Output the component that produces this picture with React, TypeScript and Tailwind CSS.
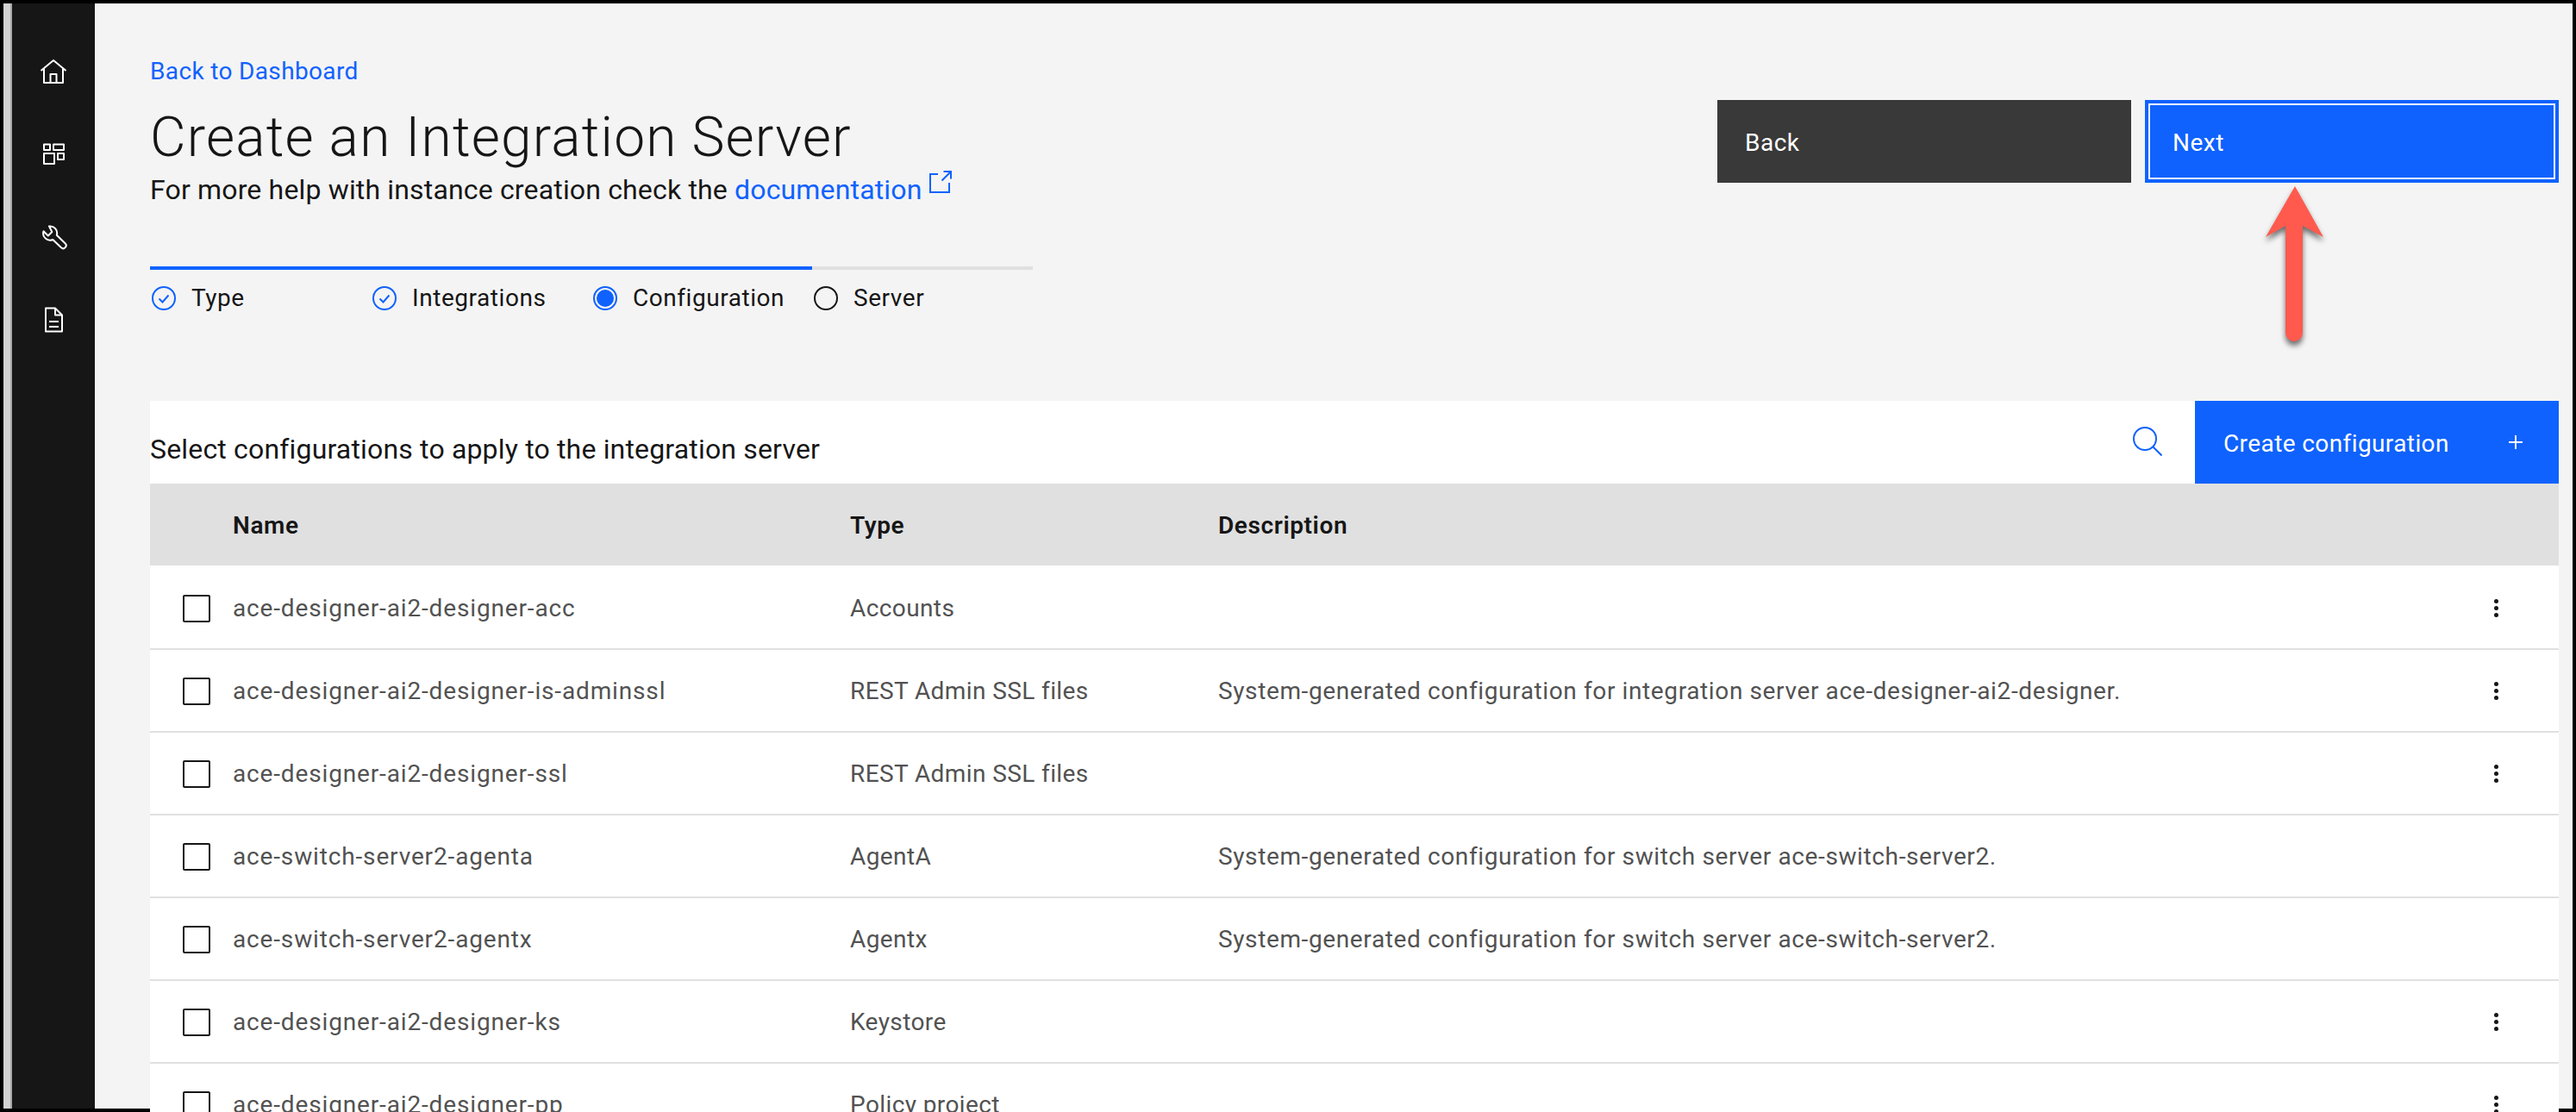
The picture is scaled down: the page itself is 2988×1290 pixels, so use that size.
import React from 'react';

const FONT = "font-['Roboto',sans-serif]";

const ROWS = [
  { name: 'ace-designer-ai2-designer-acc', type: 'Accounts', desc: '', menu: true },
  { name: 'ace-designer-ai2-designer-is-adminssl', type: 'REST Admin SSL files', desc: 'System-generated configuration for integration server ace-designer-ai2-designer.', menu: true },
  { name: 'ace-designer-ai2-designer-ssl', type: 'REST Admin SSL files', desc: '', menu: true },
  { name: 'ace-switch-server2-agenta', type: 'AgentA', desc: 'System-generated configuration for switch server ace-switch-server2.', menu: false },
  { name: 'ace-switch-server2-agentx', type: 'Agentx', desc: 'System-generated configuration for switch server ace-switch-server2.', menu: false },
  { name: 'ace-designer-ai2-designer-ks', type: 'Keystore', desc: '', menu: true },
  { name: 'ace-designer-ai2-designer-pp', type: 'Policy project', desc: '', menu: true },
];

const HomeIcon = () => (
  <svg width="32" height="32" viewBox="0 0 32 32" fill="none" stroke="white" strokeWidth="2" strokeLinejoin="round">
    <path d="M1.500 15 16 3l14.500 12" />
    <path d="M5 12.500V29h22V12.500" />
    <path d="M12.500 29V19h7v10" />
  </svg>
);

const AppsIcon = () => (
  <svg width="32" height="32" viewBox="0 0 32 32" fill="none" stroke="white" strokeWidth="2" strokeLinejoin="round">
    <rect x="5" y="4.500" width="7" height="6.500" />
    <rect x="16" y="4.500" width="12" height="6.500" />
    <rect x="5" y="15" width="12" height="12" />
    <rect x="21" y="15" width="7" height="7" />
  </svg>
);

const ToolIcon = () => (
  <svg width="32" height="32" viewBox="0 0 32 32" fill="none" stroke="white" strokeWidth="2" strokeLinejoin="round">
    <path d="M11 3.500a8 8 0 0 1 8.800 10.200l10 9.800a3.400 3.400 0 0 1-4.800 4.800L15.300 19a8 8 0 0 1-10.800-9.800l5.300 5.300 4.500-4.500Z" />
  </svg>
);

const DocIcon = () => (
  <svg width="32" height="32" viewBox="0 0 32 32" fill="none" stroke="white" strokeWidth="2" strokeLinejoin="round">
    <path d="M7 2.500h11l8 8V29.500H7Z" />
    <path d="M18 2.500v8h8" />
    <path d="M11 18h11M11 24h11" />
  </svg>
);

const CheckCircle = () => (
  <svg width="28" height="28" viewBox="0 0 28 28" fill="none" stroke="#0f62fe" strokeWidth="2">
    <circle cx="14" cy="14" r="13" />
    <path d="M8.500 14.500 12.500 18.500 19.500 10.500" />
  </svg>
);

const Step = ({ label, icon }: { label: string; icon: React.ReactNode }) => (
  <div className="flex items-center pl-[2px] gap-[18px]">
    {icon}
    <span className="text-[28px] tracking-[0.55px] text-[#161616]">{label}</span>
  </div>
);

const Kebab = () => (
  <div className="flex flex-col gap-[3px] items-center w-[5px] -mt-[2px] ml-[1px]">
    <span className="w-[5px] h-[5px] rounded-full bg-[#161616]" />
    <span className="w-[5px] h-[5px] rounded-full bg-[#161616]" />
    <span className="w-[5px] h-[5px] rounded-full bg-[#161616]" />
  </div>
);

export default function App() {
  return (
    <div className={`${FONT} flex w-[2988px] h-[1290px] overflow-hidden bg-black p-[4px]`}>
      <div className="w-[10px] shrink-0 bg-[#d2d2d2] border-r-2 border-[#a8a8a8]" />

      {/* Side nav */}
      <nav className="w-[96px] shrink-0 bg-[#161616] flex flex-col items-center pt-[31px]">
        <div className="h-[96px] flex items-center justify-center"><HomeIcon /></div>
        <div className="h-[96px] flex items-center justify-center"><AppsIcon /></div>
        <div className="h-[96px] flex items-center justify-center"><ToolIcon /></div>
        <div className="h-[96px] flex items-center justify-center"><DocIcon /></div>
      </nav>

      <main className="flex-1 min-w-0 bg-[#f4f4f4] pl-[64px] pr-[16px] pt-[63px] relative">
        {/* Heading */}
        <div className="flex justify-between items-start h-[398px]">
          <div className="w-[1024px]">
            <a className="block text-[28px] leading-[32px] tracking-[0.35px] text-[#0f62fe]">Back to Dashboard</a>
            <h1 className="mt-[19px] text-[64px] leading-[84px] font-light tracking-[1.2px] text-[#161616] whitespace-nowrap">Create an Integration Server</h1>
            <p className="-mt-[2px] text-[32px] leading-[40px] tracking-[0.16px] text-[#161616] whitespace-nowrap flex items-start">
              For more help with instance creation check the&nbsp;
              <a className="text-[#0f62fe]">documentation</a>
              <svg className="ml-[8px] -mt-[2px]" width="26" height="26" viewBox="0 0 26 26" fill="none" stroke="#0f62fe" strokeWidth="2">
                <path d="M10 4H1v21h22v-11M16.500 1H25v8.500M25 1 14.500 11.500" />
              </svg>
            </p>
            {/* Progress */}
            <div className="mt-[69px] h-[4px] bg-[#e0e0e0]">
              <div className="h-full w-[768px] bg-[#0f62fe]" />
            </div>
            <div className="grid grid-cols-4 mt-[12px]">
              <Step label="Type" icon={<CheckCircle />} />
              <Step label="Integrations" icon={<CheckCircle />} />
              <Step
                label="Configuration"
                icon={
                  <span className="w-[28px] h-[28px] rounded-full border-2 border-[#0f62fe] flex items-center justify-center">
                    <span className="w-[20px] h-[20px] rounded-full bg-[#0f62fe]" />
                  </span>
                }
              />
              <Step label="Server" icon={<span className="w-[28px] h-[28px] rounded-full border-2 border-[#161616]" />} />
            </div>
          </div>

          <div className="flex gap-[16px] mt-[49px]">
            <button className="w-[480px] h-[96px] bg-[#393939] text-white text-[28px] tracking-[0.5px] text-left pl-[32px] pt-[3px]">Back</button>
            <button className="w-[480px] h-[96px] bg-[#0f62fe] text-white text-[28px] tracking-[0.5px] text-left pl-[32px] pt-[3px] outline-2 outline-white -outline-offset-[6px]">Next</button>
          </div>
        </div>

        {/* Toolbar */}
        <div className="flex items-stretch h-[96px] bg-white">
          <div className="flex-1 pt-[36px] text-[32px] leading-[40px] tracking-[0.17px] text-[#161616] whitespace-nowrap">Select configurations to apply to the integration server</div>
          <div className="w-[96px] flex items-center pl-[24px] pb-[2px]">
            <svg width="34" height="34" viewBox="0 0 34 34" fill="none" stroke="#0f62fe" strokeWidth="2">
              <circle cx="14" cy="14" r="13" />
              <path d="M23.500 23.500 33.500 33.500" />
            </svg>
          </div>
          <button className="w-[422px] bg-[#0f62fe] text-white text-[28px] tracking-[0.4px] flex items-center justify-between pl-[33px] pr-[40px]">
            <span className="pt-[3px]">Create configuration</span>
            <svg width="20" height="20" viewBox="0 0 20 20" stroke="white" strokeWidth="2">
              <path d="M10 2v16M2 10h16" />
            </svg>
          </button>
        </div>

        {/* Table */}
        <div className="grid grid-cols-[96px_716px_427px_1fr] h-[95px] pt-[3px] items-center bg-[#e0e0e0] text-[28px] tracking-[0.6px] font-semibold text-[#161616]">
          <span className="col-start-2">Name</span>
          <span>Type</span>
          <span>Description</span>
        </div>
        <div className="bg-white pt-[2px]">
          {ROWS.map((row) => (
            <div key={row.name} className="grid grid-cols-[96px_716px_427px_1fr_76px] h-[96px] pt-[2px] items-center border-b-2 border-[#e0e0e0] text-[28px] text-[#525252] whitespace-nowrap">
              <span className="pl-[38px]">
                <span className="block w-[32px] h-[32px] rounded-[2px] border-2 border-[#161616]" />
              </span>
              <span className="tracking-[0.85px]">{row.name}</span>
              <span className="tracking-[0.4px]">{row.type}</span>
              <span className="tracking-[0.62px]">{row.desc}</span>
              <span>{row.menu && <Kebab />}</span>
            </div>
          ))}
        </div>

        {/* Annotation arrow */}
        <svg className="absolute left-[2512px] top-[212px] drop-shadow-[0_5px_3px_rgba(0,0,0,0.55)]" width="80" height="190" viewBox="0 0 80 190" fill="#ff5a4d">
          <path d="M40 0 73 59 49 46 V170 a10 10 0 0 1-20 0 V46 L6 59Z" />
        </svg>
      </main>
    </div>
  );
}
